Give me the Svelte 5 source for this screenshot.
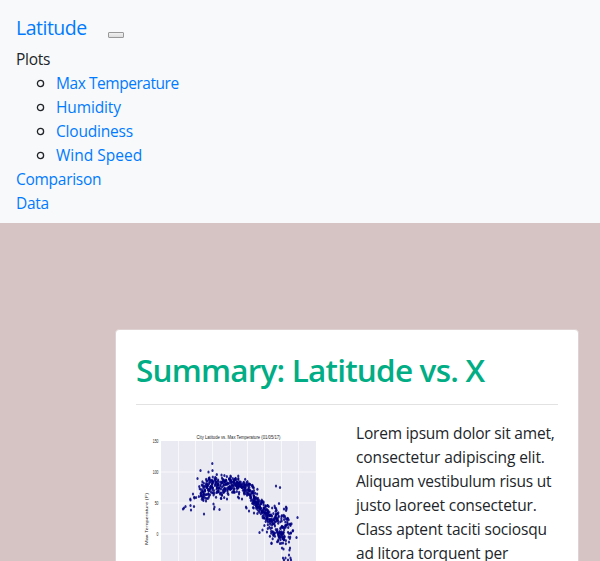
<script>
  const plots = ['Max Temperature', 'Humidity', 'Cloudiness', 'Wind Speed'];
  const lines = [
    'Lorem ipsum dolor sit amet,',
    'consectetur adipiscing elit.',
    'Aliquam vestibulum risus ut',
    'justo laoreet consectetur.',
    'Class aptent taciti sociosqu',
    'ad litora torquent per',
  ];

  const gridX = [178.5, 195.5, 212.5, 230.5, 247.5, 264.5, 281.5, 298.5];
  const gridY = [472.5, 503.5, 534.5];
  const ticks = [['150', 441], ['100', 472], ['50', 503], ['0', 534]];

  // Isolated readings, followed by the dense band of city readings.
  const points = [
    [183, 509], [184, 508], [185.5, 506.5], [190.5, 500], [190.5, 505.5], [191, 510],
    [194, 506.5], [193, 494], [194.5, 498], [190.3, 499], [197.5, 478.5], [200.5, 470.5],
    [208.5, 472], [212.3, 463.5], [212.5, 470.5], [216.8, 474.5], [204, 514], [213.5, 504],
    [214.5, 507], [214, 509], [219.5, 509.5], [206, 501], [209, 496.5], [203, 497],
    [222, 478], [226, 480], [246, 507], [246.5, 508], [249, 511], [254, 513], [242, 499],
    [276, 486], [280, 487.5], [279, 503.5], [276, 508.5], [286, 507], [286.5, 509],
    [284, 509], [297.5, 517.5], [296.5, 537.5], [259.5, 532.5], [262.5, 530], [271.5, 543],
    [271.5, 543.5], [293, 530.5], [239, 494], [238, 497], [239, 498], [227, 499],
    [283, 543], [282, 548], [283.5, 549], [289, 542], [290, 548], [289.5, 550],
    [283, 558], [285.5, 558], [289, 555], [288, 560], [291, 560], [284, 560], [290.5, 558],
  ];

  let seed = 27183;
  function random() {
    seed = (seed * 1664525 + 1013904223) % 4294967296;
    return seed / 4294967296;
  }
  const spread = () => random() + random() + random() - 1.5;

  const bands = [
    [195, 496, 204, 491, 10, 17],
    [202, 491, 213, 486, 11, 50],
    [208, 484, 216, 483, 8, 28],
    [214, 488, 228, 488, 11, 62],
    [222, 484, 238, 485, 8, 85],
    [237, 485, 246, 486, 7, 42],
    [245, 487, 253, 494, 9, 48],
    [252, 495, 260, 506, 11, 58],
    [258, 505, 268, 515, 11, 52],
    [265, 516, 280, 516, 8, 60],
    [267, 523, 286, 535, 14, 60],
    [273, 529, 285, 535, 10, 30],
    [284, 516, 292, 534, 11, 32],
  ];
  for (const [x1, y1, x2, y2, width, count] of bands) {
    for (let i = 0; i < count; i++) {
      const t = random();
      points.push([x1 + (x2 - x1) * t + spread() * 2, y1 + (y2 - y1) * t + spread() * width]);
    }
  }
</script>

<nav>
  <div class="top">
    <a class="brand" href="#top">Latitude</a>
    <button aria-label="Toggle navigation"></button>
  </div>
  <ul class="menu">
    <li>
      <span class="plots">Plots</span>
      <ul class="sub">
        {#each plots as plot, i}
          <li>
            <svg class="bullet" width="9" height="9" viewBox="0 0 9 9"><circle cx="4.5" cy="4.5" r="3.1" fill="none" stroke="#212529" stroke-width="1.3" /></svg>
            <a class="p{i}" href="#plot">{plot}</a>
          </li>
        {/each}
      </ul>
    </li>
    <li><a class="comparison" href="#comparison">Comparison</a></li>
    <li><a class="data" href="#data">Data</a></li>
  </ul>
</nav>

<main>
  <section class="card">
    <h2>Summary: Latitude vs. X</h2>
    <hr />
    <div class="content">
      <svg width="220" height="170" viewBox="136 421 220 170" role="img" aria-label="City Latitude vs. Max Temperature">
        <rect x="161" y="441" width="155" height="151" fill="#eaeaf2" />
        {#each gridX as x}<path d="M{x} 441V592" stroke="#f8f8fc" />{/each}
        {#each gridY as y}<path d="M161 {y - 0.5}H316" stroke="#f8f8fc" />{/each}
        <g fill="#000080" fill-opacity=".85">
          {#each points as [x, y]}<ellipse cx={x} cy={y} rx="1.1" ry="1.5" />{/each}
        </g>
        <g class="chart-text">
          <text x="196.5" y="438.8" textLength="84" lengthAdjust="spacingAndGlyphs">City Latitude vs. Max Temperature (01/05/17)</text>
          {#each ticks as [label, y]}
            <text x="158.5" y={y + 1.8} text-anchor="end" textLength={label.length * 1.9} lengthAdjust="spacingAndGlyphs">{label}</text>
          {/each}
          <text transform="translate(148 545) rotate(-90)" class="axis" textLength="52" lengthAdjust="spacingAndGlyphs">Max Temperature (F)</text>
        </g>
      </svg>
      <p>
        {#each lines as line, i}<span class="l{i}">{line}</span>{/each}
      </p>
    </div>
  </section>
</main>

<style>
  :global(body) { background: #d6c3c3; overflow: hidden; }
  :global(#app) { height: 561px; overflow: hidden; }
  nav, main { font: 15.5px/24px 'Open Sans', 'Noto Sans', sans-serif; color: #212529; box-sizing: border-box; }
  nav { background: #f8f9fa; height: 223px; padding: 8px 16px; }
  a { color: #007bff; text-decoration: none; }
  .top { display: flex; height: 39px; align-items: center; gap: 20px; }
  .brand { font-size: 19.5px; line-height: 30px; width: 72px; white-space: nowrap; letter-spacing: -.5px; }
  button { width: 16px; height: 6px; margin: 14px 0 0; padding: 0; border: 1px solid #999; border-radius: 1px; background: linear-gradient(#f1f1f1, #ddd); box-sizing: border-box; }
  ul { margin: 0; padding: 0; list-style: none; }
  .sub { padding-left: 20px; }
  .sub li { display: flex; align-items: center; gap: 11px; }
  .bullet { margin-top: 1px; }
  .plots { letter-spacing: -.25px; }
  .p0 { letter-spacing: -.45px; }
  .p1 { letter-spacing: -.13px; }
  .p2 { letter-spacing: -.2px; }
  .comparison { letter-spacing: -.28px; }
  .data { letter-spacing: -.3px; }
  main { padding: 106px 21px 0 115px; }
  .card { background: #fff; border: 1px solid #dfd2d2; border-radius: 4px; height: 500px; padding: 20px; box-sizing: border-box; }
  h2 { margin: 0; font-size: 31.5px; line-height: 40px; height: 38px; font-weight: 600; letter-spacing: -.8px; color: #00ad84; white-space: nowrap; }
  hr { margin: 16px 0; border: 0; border-top: 1px solid #e2e2e2; }
  .content { display: flex; }
  svg { flex: none; display: block; }
  p { margin: 0; white-space: nowrap; }
  p span { display: block; }
  .l0 { letter-spacing: -.2px; }
  .l1 { letter-spacing: -.1px; }
  .l2 { letter-spacing: -.22px; }
  .l3 { letter-spacing: -.14px; }
  .l4 { letter-spacing: -.15px; }
  .l5 { letter-spacing: -.18px; }
  .chart-text { font-family: 'Liberation Sans', Arial, sans-serif; font-size: 5.5px; fill: #222; }
  .axis { font-size: 4px; }
</style>
